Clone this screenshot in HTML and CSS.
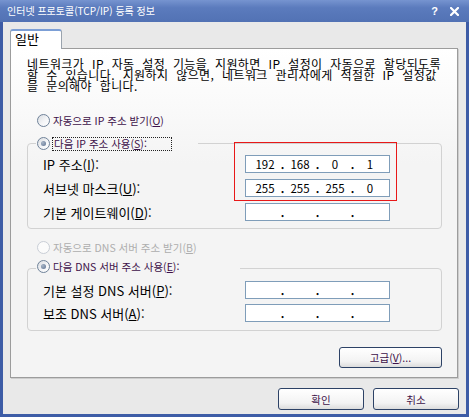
FILE: index.html
```html
<!DOCTYPE html>
<html lang="ko">
<head>
    <meta charset="UTF-8">
    <title>인터넷 프로토콜(TCP/IP) 등록 정보</title>
    <link rel="stylesheet" href="styles.css">
</head>
<body>
    <div class="window">
        <!-- 제목 표시줄 -->
        <div class="titlebar">
            <span class="title">인터넷 프로토콜(TCP/IP) 등록 정보</span>
            <span class="title-btns">
                <span class="help">?</span>
                <svg class="close" width="9" height="9" viewBox="0 0 9 9">
                    <path d="M1 1 L8 8 M8 1 L1 8" stroke="#fff" stroke-width="2.2" stroke-linecap="square"/>
                </svg>
            </span>
        </div>

        <div class="frame">
            <div class="tabs">
                <div class="tab">일반</div>
            </div>

            <div class="panel">
                <p class="desc">
                    <span class="line">네트워크가 IP 자동 설정 기능을 지원하면 IP 설정이 자동으로 할당되도록</span>
                    <span class="line">할 수 있습니다. 지원하지 않으면, 네트워크 관리자에게 적절한 IP 설정값</span>
                    <span class="line">을 문의해야 합니다.</span>
                </p>

                <div class="opt first">
                    <span class="radio"></span>
                    <span class="opt-label">자동으로 IP 주소 받기(<u>O</u>)</span>
                </div>

                <fieldset class="group">
                    <legend class="ip-legend">
                        <span class="opt">
                            <span class="radio checked"></span>
                            <span class="opt-label focus">다음 IP 주소 사용(<u>S</u>):</span>
                        </span>
                    </legend>
                    <div class="fields">
                        <label>IP 주소(<u>I</u>):</label>
                        <div class="ipbox">
                            <span class="oct">192</span><span class="dot">.</span><span class="oct">168</span><span class="dot">.</span><span class="oct">0</span><span class="dot">.</span><span class="oct">1</span>
                        </div>
                        <label>서브넷 마스크(<u>U</u>):</label>
                        <div class="ipbox">
                            <span class="oct">255</span><span class="dot">.</span><span class="oct">255</span><span class="dot">.</span><span class="oct">255</span><span class="dot">.</span><span class="oct">0</span>
                        </div>
                        <label>기본 게이트웨이(<u>D</u>):</label>
                        <div class="ipbox">
                            <span class="oct"></span><span class="dot">.</span><span class="oct"></span><span class="dot">.</span><span class="oct"></span><span class="dot">.</span><span class="oct"></span>
                        </div>
                    </div>
                </fieldset>

                <div class="opt second disabled">
                    <span class="radio"></span>
                    <span class="opt-label">자동으로 DNS 서버 주소 받기(<u>B</u>)</span>
                </div>

                <fieldset class="group dns">
                    <legend class="dns-legend">
                        <span class="opt">
                            <span class="radio checked"></span>
                            <span class="opt-label">다음 DNS 서버 주소 사용(<u>E</u>):</span>
                        </span>
                    </legend>
                    <div class="fields">
                        <label>기본 설정 DNS 서버(<u>P</u>):</label>
                        <div class="ipbox">
                            <span class="oct"></span><span class="dot">.</span><span class="oct"></span><span class="dot">.</span><span class="oct"></span><span class="dot">.</span><span class="oct"></span>
                        </div>
                        <label>보조 DNS 서버(<u>A</u>):</label>
                        <div class="ipbox">
                            <span class="oct"></span><span class="dot">.</span><span class="oct"></span><span class="dot">.</span><span class="oct"></span><span class="dot">.</span><span class="oct"></span>
                        </div>
                    </div>
                </fieldset>

                <div class="adv-row">
                    <button class="btn adv">고급(<u>V</u>)...</button>
                </div>

                <!-- 강조 표시 -->
                <div class="highlight"></div>
            </div>

            <div class="footer">
                <button class="btn">확인</button>
                <button class="btn">취소</button>
            </div>
        </div>
    </div>
</body>
</html>
```

FILE: styles.css
```css
/* 기본 */
* {
    box-sizing: border-box;
}

body {
    margin: 0;
    background: #e9e9e9;
    font-family: "Noto Sans CJK KR", "Noto Sans", sans-serif;
    overflow: hidden;
}

.window {
    width: 469px;
    height: 417px;
    display: flex;
    flex-direction: column;
}

/* 제목 표시줄 */
.titlebar {
    height: 22px;
    display: flex;
    align-items: center;
    justify-content: space-between;
    padding: 0 10px 0 7px;
    background: linear-gradient(to bottom, #7694d0 0%, #5b7bbd 35%, #5272b4 100%);
    color: #fff;
}

.title {
    font-size: 10px;
    line-height: 12px;
}

.title-btns {
    display: flex;
    align-items: center;
    gap: 12px;
}

.help {
    font-family: "Liberation Sans", sans-serif;
    font-weight: bold;
    font-size: 11px;
}

/* 창 본문 */
.frame {
    flex: 1;
    border: 3px solid #3d5ca6;
    border-top: 0;
    background: #e9e9e9;
    padding: 7px 7px 4px 7px;
    display: flex;
    flex-direction: column;
}

.tabs {
    display: flex;
    height: 19px;
}

.tab {
    position: relative;
    z-index: 1;
    width: 52px;
    height: 20px;
    padding-left: 4px;
    background: #fff;
    border: 1px solid #9aa3ad;
    border-top: 2px solid #7c9fd6;
    border-bottom: 0;
    border-radius: 3px 3px 0 0;
    font-size: 13px;
    line-height: 16px;
    color: #000;
}

.panel {
    position: relative;
    width: 448px;
    height: 330px;
    border: 1px solid #9c9c9c;
    box-shadow: 1px 1px 0 #cdcdcd;
    background: linear-gradient(to bottom, #ffffff 0%, #f4f4f4 35%, #f4f4f4 100%);
    padding: 9px 15px 0 16px;
}

.desc {
    margin: 0;
    font-size: 12px;
    line-height: 11px;
    letter-spacing: 0.4px;
    word-spacing: 4px;
    color: #000;
}

.desc .line {
    display: block;
    white-space: nowrap;
}

/* 라디오 버튼 */
.opt {
    display: flex;
    align-items: center;
    gap: 3px;
    height: 13px;
}

.opt.first {
    margin: 23px 0 0 10px;
}

.opt.second {
    margin: 12px 0 0 10px;
}

legend .opt {
    margin-left: 1px;
}

.radio {
    width: 13px;
    height: 13px;
    flex: 0 0 13px;
    border-radius: 50%;
    border: 1px solid #6f8299;
    background: linear-gradient(135deg, #d9dce1 0%, #f4f5f7 55%, #ffffff 100%);
    position: relative;
}

.radio.checked::after {
    content: "";
    position: absolute;
    left: 3px;
    top: 3px;
    width: 5px;
    height: 5px;
    border-radius: 50%;
    background: radial-gradient(circle at 35% 35%, #a6b4c6, #5e7291);
}

.opt-label {
    font-size: 10.5px;
    line-height: 12px;
    color: #3d1149;
    white-space: nowrap;
}

.opt-label.focus {
    outline: 1px dotted #222;
    outline-offset: 0;
    padding: 0 24px 0 1px;
}

.disabled .radio {
    border-color: #c9ced6;
    background: #fbfbfb;
}

.disabled .opt-label {
    color: #aeaeae;
}

/* 그룹 상자 */
.group {
    margin: 10px 0 0;
    padding: 5px 0 7px 8px;
    border: 1px solid #d2d2d2;
    border-radius: 4px;
    min-width: 0;
}

.group legend {
    padding: 0;
    height: 13px;
}

.ip-legend {
    width: 162px;
}

.group.dns {
    margin-top: 6px;
    padding-bottom: 8px;
}

.group .dns-legend {
    width: 204px;
    height: 16px;
    padding-bottom: 3px;
}

.fields {
    display: grid;
    grid-template-columns: 202px 145px;
    row-gap: 6px;
    align-items: center;
    padding-left: 7px;
}

.dns .fields {
    row-gap: 5px;
}

.fields label {
    font-size: 13px;
    line-height: 15px;
    color: #000;
    white-space: nowrap;
}

.ipbox {
    height: 18px;
    border: 1px solid #7f9db9;
    background: #fff;
    display: flex;
    align-items: center;
    padding: 0 4px;
}

.oct {
    width: 30px;
    text-align: center;
    font-size: 11.5px;
    line-height: 14px;
    color: #000;
}

.dot {
    width: 5px;
    text-align: center;
    font-size: 11px;
    line-height: 14px;
    font-weight: bold;
}

/* 버튼 */
.adv-row {
    display: flex;
    justify-content: flex-end;
    margin-top: 16px;
}

.btn {
    width: 86px;
    height: 22px;
    padding: 0;
    border: 1px solid #2d4266;
    border-radius: 3px;
    background: linear-gradient(to bottom, #ffffff 0%, #f3f3f3 70%, #dcdcdc 100%);
    font-family: inherit;
    font-size: 10.5px;
    color: #3d1149;
}

.btn.adv {
    width: 103px;
    height: 21px;
}

.footer {
    display: flex;
    justify-content: flex-end;
    gap: 9px;
    margin-top: 10px;
}

/* 빨간 강조 사각형 */
.highlight {
    position: absolute;
    left: 223px;
    top: 93px;
    width: 163px;
    height: 59px;
    border: 1px solid #e81818;
}
```
